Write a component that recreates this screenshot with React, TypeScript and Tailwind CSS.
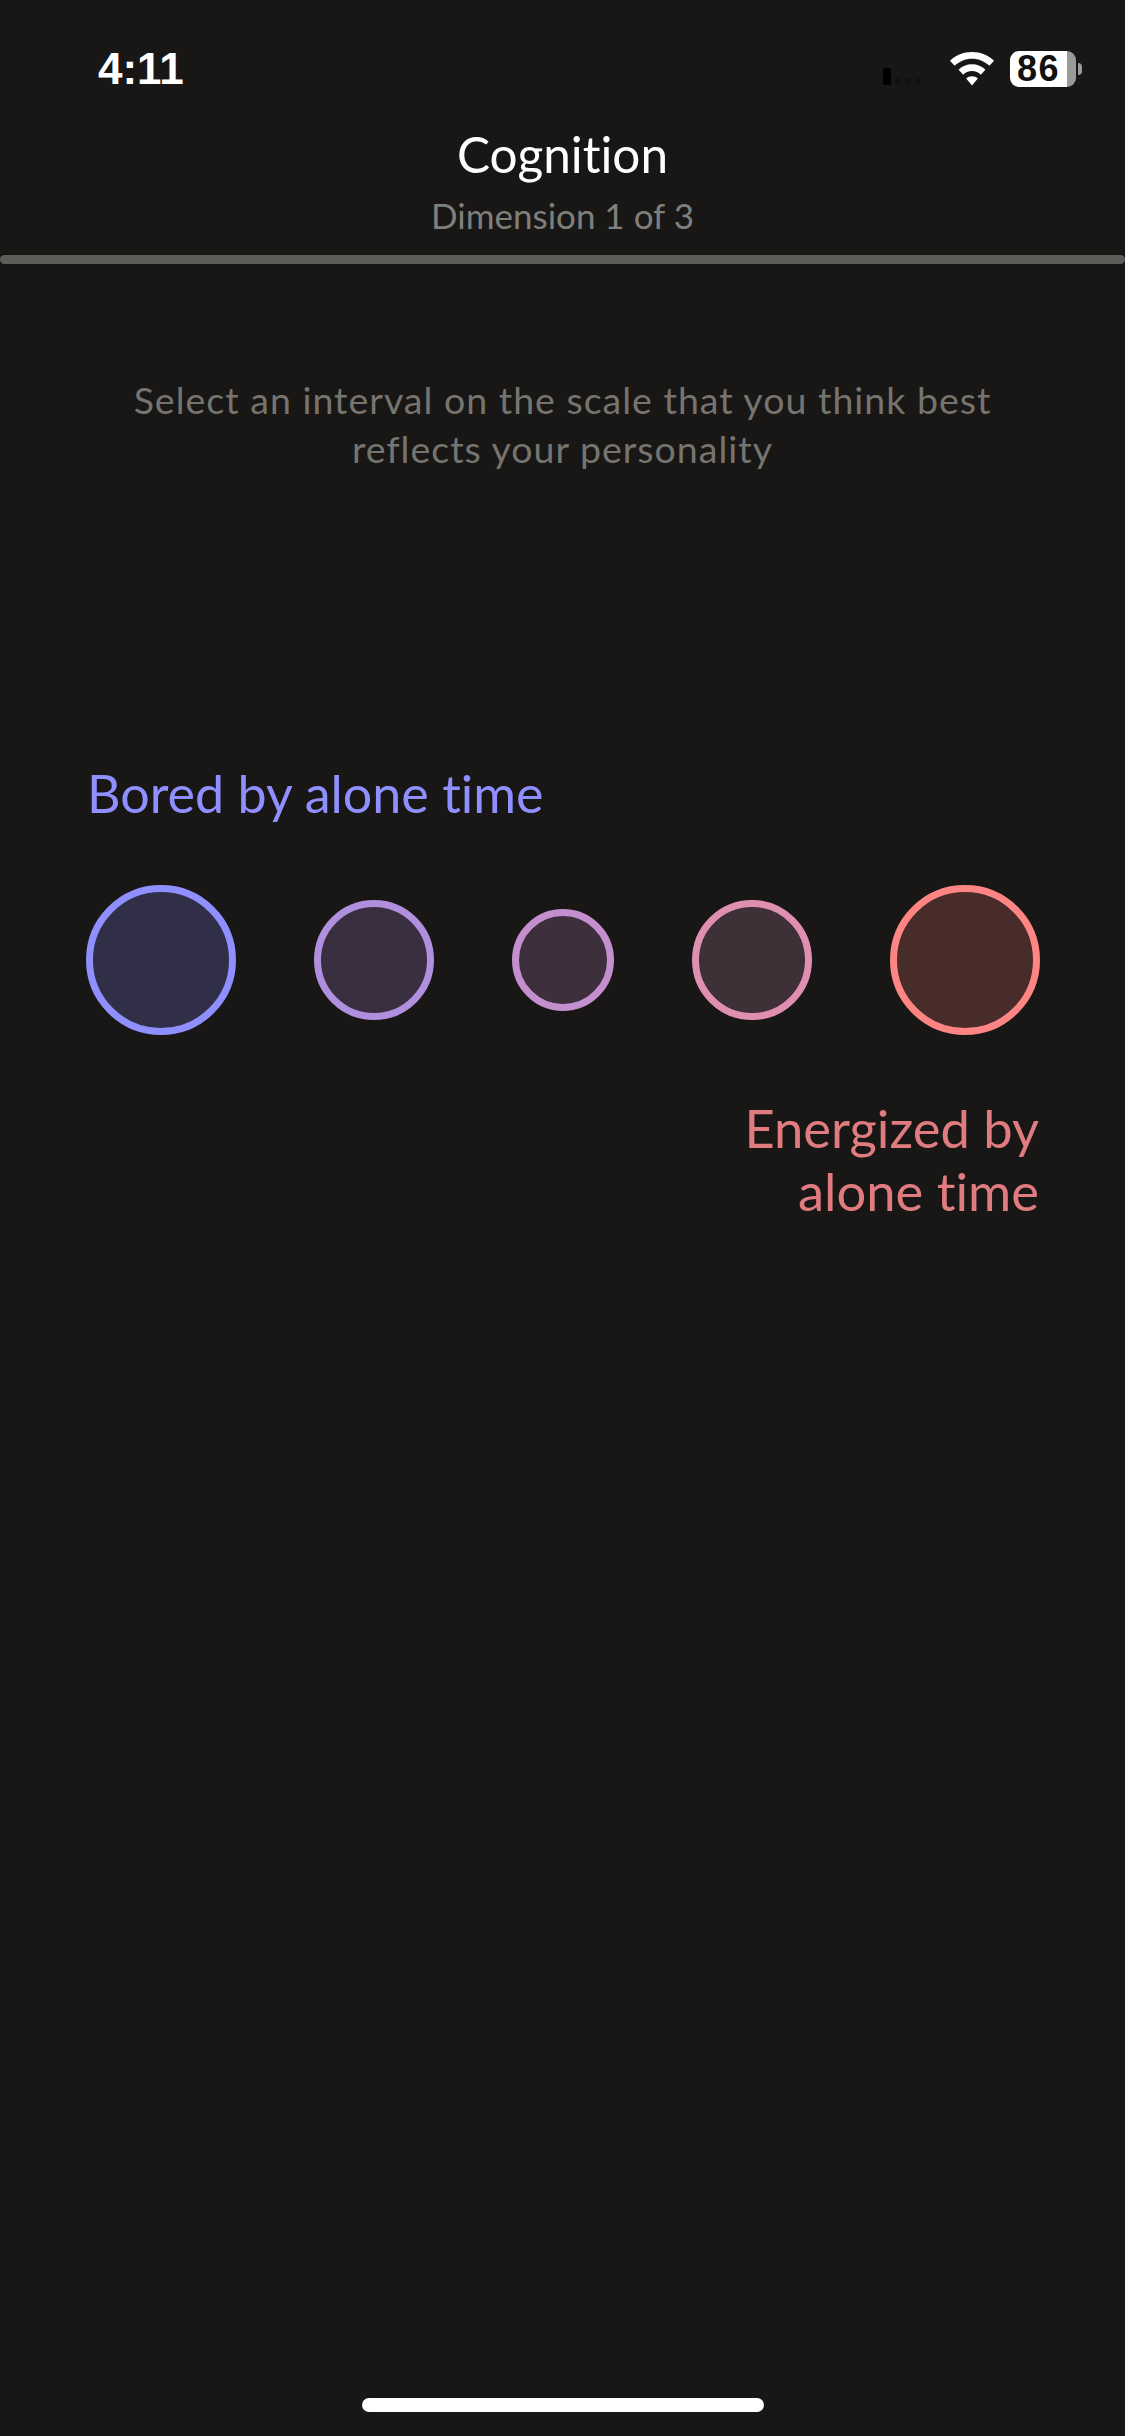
import React from "react";

const circles = [
  { size: "w-[150px] h-[150px]", color: "border-[#8f8fff] bg-[#302f47]" },
  { size: "w-[120px] h-[120px]", color: "border-[#b08fdf] bg-[#392f40]" },
  { size: "w-[102px] h-[102px]", color: "border-[#c48fcf] bg-[#3d2f3b]" },
  { size: "w-[120px] h-[120px]", color: "border-[#df8fb0] bg-[#3f2f36]" },
  { size: "w-[150px] h-[150px]", color: "border-[#ff8585] bg-[#472c2a]" },
];

const StatusBar = () => (
  <div className="flex h-[110px] items-start justify-between pl-[98px] pr-[43px] pt-[43px]">
    <span className="text-[44px] leading-[52px] font-bold text-white font-['Liberation_Sans',sans-serif]">
      4:11
    </span>
    <div className="flex items-center pt-[8px]">
      <div className="mr-[28px] mt-[14px] flex items-end gap-[4px]">
        <div className="h-[17px] w-[8px] rounded-[2px] bg-black" />
        <div className="h-[7px] w-[6px] rounded-[1px] bg-[#111110]" />
        <div className="h-[7px] w-[6px] rounded-[1px] bg-[#111110]" />
        <div className="h-[7px] w-[6px] rounded-[1px] bg-[#111110]" />
      </div>
      <svg width="46" height="34" viewBox="0 0 46 34" className="mr-[15px]">
        <path
          d="M23 0C14.5 0 6.7 3.3 1 8.8l4.6 5C10.2 9.4 16.3 6.7 23 6.7s12.8 2.7 17.4 7.1l4.600-5C39.300 3.300 31.500 0 23 0Z"
          fill="#fff"
        />
        <path
          d="M23 12.300c-5.200 0-9.900 2-13.400 5.400l4.600 5c2.300-2.200 5.400-3.600 8.800-3.600s6.500 1.400 8.800 3.600l4.600-5C32.900 14.300 28.200 12.300 23 12.300Z"
          fill="#fff"
        />
        <path d="M23 24.200c-2.300 0-4.300.9-5.800 2.300L23 33.500l5.800-7C27.300 25.100 25.300 24.200 23 24.200Z" fill="#fff" />
      </svg>
      <div className="flex items-center">
        <div className="flex h-[36px] w-[57px] items-center justify-center rounded-l-[9px] bg-white text-[36px] font-bold leading-[36px] tracking-[1.5px] text-[#111] font-['Liberation_Sans',sans-serif]">
          86
        </div>
        <div className="h-[36px] w-[9px] rounded-r-[9px] bg-[#9a9a9a]" />
        <div className="ml-[2px] h-[12px] w-[4px] rounded-r-full bg-[#9a9a9a]" />
      </div>
    </div>
  </div>
);

export default function App() {
  return (
    <div className="relative flex h-[2436px] w-[1125px] flex-col bg-[#181716] font-['Lato',sans-serif] [font-variant-ligatures:none]">
      <StatusBar />
      <div className="mt-[14px] flex flex-col items-center">
        <h1 className="text-[49.5px] leading-[60px] font-normal text-white">Cognition</h1>
        <p className="mt-[9px] text-[35px] leading-[44px] text-[#7f7f7c]">Dimension 1 of 3</p>
      </div>
      <div className="mt-[18px] h-[9px] w-full rounded-full bg-[#5c5c58]" />
      <p className="mt-[111px] text-center text-[37.5px] leading-[49px] tracking-[1px] text-[#75746f]">
        Select an interval on the scale that you think best
        <br />
        reflects your personality
      </p>
      <p className="mt-[290px] pl-[87px] text-[52px] leading-[60px] text-[#8f8fff]">Bored by alone time</p>
      <div className="mt-[62px] flex items-center justify-between pl-[86px] pr-[85px]">
        {circles.map((c, i) => (
          <div key={i} className={`rounded-full border-[7px] ${c.size} ${c.color}`} />
        ))}
      </div>
      <p className="mt-[61px] pr-[86px] text-right text-[52.5px] leading-[63px] text-[#e07b7f]">
        Energized by
        <br />
        alone time
      </p>
      <div className="absolute bottom-[24px] left-[362px] h-[14px] w-[402px] rounded-full bg-white" />
    </div>
  );
}
